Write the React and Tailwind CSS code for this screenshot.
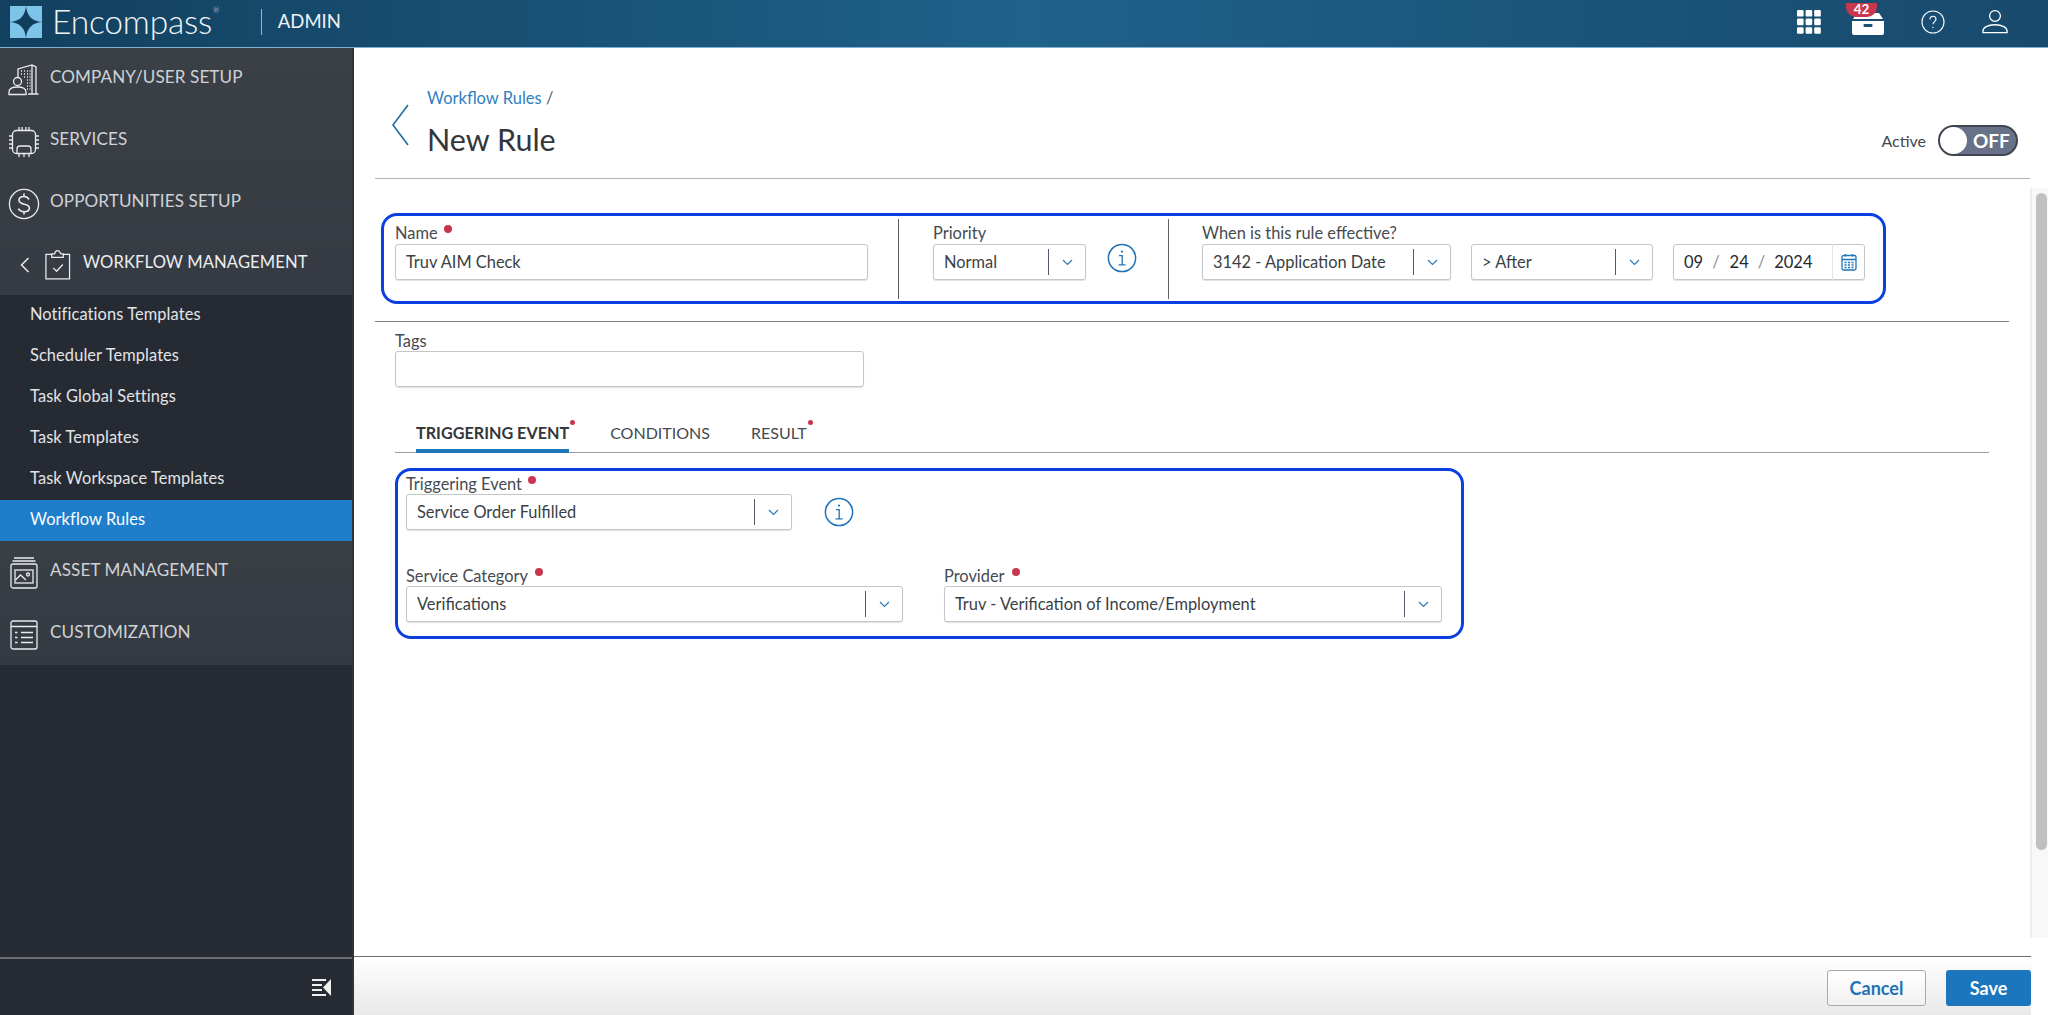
import React from "react";

const font = { fontFamily: '"Lato","Noto Sans",sans-serif' };

function Dot({ className = "ml-[6px]" }) {
  return <span className={"inline-block rounded-full bg-[#c8374d] w-[8px] h-[8px] relative -top-[6px] " + className} />;
}

function Chevron() {
  return (
    <svg width="11" height="7" viewBox="0 0 11 7" fill="none" stroke="#2b7ab8" strokeWidth="1.2">
      <path d="M1 1 L5.5 5.5 L10 1" />
    </svg>
  );
}

function Select({ value, className = "" }) {
  return (
    <div className={"flex items-center h-[36px] bg-white border border-[#c4c6c9] rounded-[3px] shadow-[0_1px_1px_rgba(0,0,0,0.12)] " + className}>
      <span className="flex-1 pl-[10px] text-[16.4px] text-[#3a3f45] whitespace-nowrap truncate">{value}</span>
      <span className="w-px h-[26px] bg-[#53596a]" />
      <span className="w-[36px] flex justify-center"><Chevron /></span>
    </div>
  );
}

function Label({ children, dot, dotClass, className = "" }) {
  return (
    <div className={"h-[15px] leading-[15px] text-[16.4px] text-[#464a50] whitespace-nowrap " + className}>
      {children}
      {dot && <Dot className={dotClass} />}
    </div>
  );
}

function Info({ className = "" }) {
  return (
    <svg className={className} width="30" height="30" viewBox="0 0 30 30" fill="none" stroke="#2073b8" strokeWidth="1.5">
      <circle cx="15" cy="15" r="13.6" />
      <circle cx="15" cy="8.6" r="1.1" fill="#2073b8" stroke="none" />
      <path d="M12 12.6 H15.2 V21.6 M11.6 21.8 H18.6" strokeWidth="1.3" />
    </svg>
  );
}

const ic = { fill: "none", stroke: "#e9ebee", strokeWidth: 1.3 };

function IconCompany() {
  return (
    <svg width="32" height="32" viewBox="0 0 32 32" {...ic}>
      <path d="M10 13 V5 L24 1 L28 3 V30 H30.5 M24 1 V30 M28 30 H20" />
      <path d="M13 7h1M16 7h1M19 7h1M21.5 7h1M13 10h1M16 10h1M19 10h1M21.5 10h1M16 13h1M19 13h1M21.5 13h1M19 16h1M21.5 16h1M19 19h1M21.5 19h1M19 22h1M21.5 22h1M19 25h1M21.5 25h1" />
      <circle cx="9.5" cy="17.5" r="4" />
      <path d="M1 30.5 v-2.5 c0-3 3-5 8.5-5 s8.5 2 8.5 5 v2.5 z" />
    </svg>
  );
}
function IconChip() {
  return (
    <svg width="32" height="32" viewBox="0 0 32 32" {...ic}>
      <rect x="4.5" y="4.5" width="23" height="23" rx="4" />
      <path d="M11 1v3.5M14 1v3.5M18 1v3.5M21 1v3.5M11 27.5V31M16 27.5V31M21 27.5V31M1 10h3.5M1 14h3.5M1 18h3.5M1 22h3.5M27.5 10H31M27.5 14H31M27.5 18H31M27.5 22H31" />
      <path d="M9 27 v-4 q0-3 3-3 h8 q3 0 3 3 v4" />
    </svg>
  );
}
function IconDollar() {
  return (
    <svg width="32" height="32" viewBox="0 0 32 32" {...ic}>
      <circle cx="16" cy="16" r="14.6" />
      <path d="M21 11.5 c-1-2-3-3-5-3 c-3 0-5 1.6-5 3.8 c0 5.4 10.4 2.4 10.4 7.6 c0 2.4-2.4 3.8-5.4 3.8 c-2.4 0-4.6-1-5.6-3 M16 5.5 V8.5 M16 23.7 V26.5" strokeWidth="1.6" />
    </svg>
  );
}
function IconClipboard() {
  return (
    <svg width="27" height="32" viewBox="0 0 28 32" {...ic}>
      <path d="M8 5 H2 V30.5 H26.5 V5 H20 M8 8 V4.5 H11 Q11.6 1 14 1 T17.4 4.5 H20 V8 Z" />
      <path d="M9.5 19 L13 22.5 L19.5 15.5" />
    </svg>
  );
}
function IconAsset() {
  return (
    <svg width="28" height="32" viewBox="0 0 28 32" {...ic}>
      <path d="M4 1h20M2.5 4h23" />
      <rect x="1" y="7" width="26" height="24" rx="2" />
      <rect x="5" y="13" width="18" height="13" />
      <path d="M5.5 23 L10.5 18 L16 23" />
      <circle cx="18" cy="17.5" r="1.5" />
    </svg>
  );
}
function IconList() {
  return (
    <svg width="28" height="30" viewBox="0 0 28 30" {...ic}>
      <rect x="1" y="1" width="26" height="28" rx="2" />
      <path d="M1 6.5 H27 M11 12.5 H23 M11 17.5 H23 M11 22.5 H23 M5 12.5 H7.5 M5 17.5 H7.5 M5 22.5 H7.5" />
    </svg>
  );
}

function NavRow({ icon, label, iconW = "w-[32px]" }) {
  return (
    <div className="h-[62px] flex items-center pl-[8px] gap-[10px] text-[17.1px] text-[#cfd2d6] tracking-[0.1px] whitespace-nowrap">
      <span className={"flex justify-center shrink-0 relative top-[1px] " + iconW}>{icon}</span>
      <span className="relative -top-[2px]">{label}</span>
    </div>
  );
}

function SubItem({ children, active }) {
  return (
    <div className={"h-[41px] flex items-center pl-[30px] text-[16.4px] tracking-[0.1px] whitespace-nowrap " + (active ? "bg-[#1e7ecb] text-white" : "text-[#e2e4e7]")}>
      <span className="relative -top-[1px]">{children}</span>
    </div>
  );
}

function Sidebar() {
  return (
    <aside className="w-[354px] shrink-0 flex flex-col bg-[#262a32] border-r-2 border-r-[#2f333a]">
      <div className="bg-gradient-to-b from-[#3b4047] to-[#363b43]">
        <NavRow icon={<IconCompany />} label="COMPANY/USER SETUP" />
        <NavRow icon={<IconChip />} label="SERVICES" />
        <NavRow icon={<IconDollar />} label="OPPORTUNITIES SETUP" />
        <div className="h-[61px] flex items-center pl-[20px] text-[16.6px] text-[#eceef0] tracking-[0.1px] whitespace-nowrap">
          <svg width="10" height="16" viewBox="0 0 10 16" fill="none" stroke="#e9ebee" strokeWidth="1.5" className="mr-[14px]"><path d="M8.5 1 L1.5 8 L8.5 15" /></svg>
          <span className="mr-[12px]"><IconClipboard /></span>
          <span className="relative -top-[2px]">WORKFLOW MANAGEMENT</span>
        </div>
      </div>
      <div>
        <SubItem>Notifications Templates</SubItem>
        <SubItem>Scheduler Templates</SubItem>
        <SubItem>Task Global Settings</SubItem>
        <SubItem>Task Templates</SubItem>
        <SubItem>Task Workspace Templates</SubItem>
        <SubItem active>Workflow Rules</SubItem>
      </div>
      <div className="bg-gradient-to-b from-[#3a3f46] to-[#343a42]">
        <NavRow icon={<IconAsset />} label="ASSET MANAGEMENT" />
        <NavRow icon={<IconList />} label="CUSTOMIZATION" />
      </div>
      <div className="flex-1" />
      <div className="h-[58px] border-t-2 border-t-[#6b6e73] flex justify-end items-center pr-[20px]">
        <svg width="20" height="18" viewBox="0 0 20 18" fill="#f0f0f0">
          <rect x="0" y="1" width="14" height="2" />
          <rect x="0" y="6" width="10" height="2" />
          <rect x="0" y="11" width="10" height="2" />
          <rect x="0" y="16" width="14" height="2" />
          <path d="M19 1 V18 L11 9.5 Z" />
        </svg>
      </div>
    </aside>
  );
}

function Logo() {
  return (
    <svg width="32" height="32" viewBox="0 0 32 32">
      <rect width="32" height="32" fill="#7ec3e8" />
      <path d="M16 0 C17 10 22 15 32 16 C22 17 17 22 16 32 C15 22 10 17 0 16 C10 15 15 10 16 0 Z" fill="#123e5e" />
    </svg>
  );
}

function Header() {
  return (
    <header className="h-[48px] shrink-0 flex items-center pb-[4px] bg-gradient-to-r from-[#12405f] via-[#1f618a] to-[#184a6d] border-b border-b-[#7fb2d3] text-white">
      <div className="ml-[10px]"><Logo /></div>
      <div className="ml-[10px] text-[33.6px] font-light tracking-[-0.2px] leading-none text-[#f2f5f8] flex">
        Encompass<span className="text-[7px] ml-[1px] mt-[2px]">®</span>
      </div>
      <div className="ml-[42px] w-px h-[26px] bg-[#8db5cf]" />
      <div className="ml-[16px] text-[18.5px] text-[#eef2f5]">ADMIN</div>
      <div className="flex-1" />
      <svg width="24" height="24" viewBox="0 0 24 24" fill="#fff" className="mr-[31px]">
        {[0, 1, 2].map((r) => [0, 1, 2].map((c) => <rect key={r + "-" + c} x={c * 8.6} y={r * 8.6} width="6.6" height="6.6" rx="1.2" />))}
      </svg>
      <div className="relative mr-[37px] mt-[1px]">
        <svg width="32" height="22" viewBox="0 0 32 22" fill="#fff" className="mt-[4px]">
          <path d="M5 0 H27 L31 6 H1 Z" />
          <path d="M0 8 H32 V20 Q32 22 30 22 H2 Q0 22 0 20 Z" />
          <rect x="11.5" y="11" width="9" height="3" rx="1" fill="#1a5273" />
        </svg>
        <span className="absolute -top-[6px] -left-[6px] w-[31px] h-[14px] flex items-start justify-center rounded-b-[10px] bg-[#c8374d] text-[13.5px] leading-[13px] font-bold text-white">42</span>
      </div>
      <svg width="24" height="24" viewBox="0 0 24 24" fill="none" stroke="#fff" strokeWidth="1.1" className="mr-[37px]">
        <circle cx="12" cy="12" r="11" />
        <path d="M9 9.5 c0-2 1.4-3.2 3-3.2 s3 1.2 3 3 c0 2.2-3 2.4-3 5" />
        <circle cx="12" cy="17.4" r="0.7" fill="#fff" stroke="none" />
      </svg>
      <svg width="26" height="25" viewBox="0 0 28 26" fill="none" stroke="#fff" strokeWidth="1.4" className="mr-[40px]">
        <circle cx="14" cy="7" r="5.8" />
        <path d="M1 25 v-1.5 c0-4 5-7 13-7 s13 3 13 7 V25 Z" />
      </svg>
    </header>
  );
}

function Content() {
  return (
    <div className="flex-1 flex flex-col min-w-0 pl-[21px]">
      <div className="h-[131px] flex items-start border-b border-b-[#b0b2b5] relative">
        <svg width="20" height="44" viewBox="0 0 20 44" fill="none" stroke="#1d6f9f" strokeWidth="1.6" className="ml-[16px] mt-[55px] shrink-0">
          <path d="M17 2 L2 22 L17 42" />
        </svg>
        <div className="ml-[16px] mt-[41px]">
          <div className="text-[16.5px] leading-[18px] text-[#2f7fc1]">Workflow Rules <span className="text-[#5c6168]">/</span></div>
          <div className="mt-[15px] text-[30.5px] leading-[34px] text-[#33373c]">New Rule</div>
        </div>
        <div className="flex-1" />
        <div className="flex items-center mt-[77px] mr-[12px]">
          <span className="text-[16px] text-[#44484e] mr-[12px]">Active</span>
          <div className="w-[80px] h-[31px] rounded-full bg-[#677187] border-2 border-[#3f4650] flex items-center relative">
            <span className="w-[27px] h-[27px] rounded-full bg-white" />
            <span className="ml-[6px] text-[19px] font-bold text-white leading-none">OFF</span>
          </div>
        </div>
      </div>

      <div className="mt-[34px] ml-[6px] mr-[144px] h-[91px] border-[3px] border-[#0a3fe0] rounded-[16px] flex items-center pl-[11px] pr-[18px]">
        <div className="w-[473px] shrink-0 self-start mt-[9px]">
          <Label dot>Name</Label>
          <div className="mt-[4px] h-[36px] bg-white border border-[#c4c6c9] rounded-[3px] shadow-[0_1px_1px_rgba(0,0,0,0.12)] flex items-center pl-[10px] text-[16.4px] text-[#3a3f45]">Truv AIM Check</div>
        </div>
        <div className="ml-[30px] w-px h-[80px] bg-[#5e6268] shrink-0" />
        <div className="ml-[34px] w-[153px] shrink-0 self-start mt-[9px]">
          <Label>Priority</Label>
          <Select value="Normal" className="mt-[4px]" />
        </div>
        <Info className="ml-[21px] -mt-[1px] shrink-0" />
        <div className="ml-[31px] w-px h-[80px] bg-[#5e6268] shrink-0" />
        <div className="ml-[33px] shrink-0 self-start mt-[9px]">
          <Label>When is this rule effective?</Label>
          <div className="mt-[4px] flex">
            <Select value="3142 - Application Date" className="w-[249px]" />
            <Select value="> After" className="w-[182px] ml-[20px]" />
            <div className="ml-[20px] w-[192px] h-[36px] border border-[#c4c6c9] rounded-[3px] shadow-[0_1px_1px_rgba(0,0,0,0.12)] flex items-center text-[16.5px] text-[#25282c]">
              <span className="ml-[10px]">09</span>
              <span className="ml-[9px] text-[#8a8e94]">/</span>
              <span className="ml-[10px]">24</span>
              <span className="ml-[9px] text-[#8a8e94]">/</span>
              <span className="ml-[9px]">2024</span>
              <span className="flex-1" />
              <span className="w-[32px] h-[36px] border-l border-l-[#e2e3e5] flex items-center justify-center">
                <svg width="16" height="18" viewBox="0 0 16 18" fill="none" stroke="#1f77bb" strokeWidth="1.3">
                  <rect x="1" y="2.5" width="14" height="14.5" rx="1.5" />
                  <path d="M1 6.5 H15 M4.5 1 V3.5 M11.5 1 V3.5" />
                  <path d="M3.5 9.5h2M7 9.5h2M10.5 9.5h2M3.5 12h2M7 12h2M10.5 12h2M3.5 14.5h2M7 14.5h2M10.5 14.5h2" strokeWidth="1.4" />
                </svg>
              </span>
            </div>
          </div>
        </div>
      </div>

      <div className="mt-[17px] border-t border-t-[#7c7f84] mr-[21px] pl-[20px] pt-[11px]">
        <Label>Tags</Label>
        <div className="mt-[3px] w-[469px] h-[36px] border border-[#c4c6c9] rounded-[3px] shadow-[0_1px_1px_rgba(0,0,0,0.12)]" />
      </div>

      <div className="mt-[29px] ml-[20px] mr-[41px] h-[37px] border-b border-b-[#9a9da8] flex text-[16px] whitespace-nowrap">
        <div className="ml-[21px] h-[37px] border-b-[4px] border-b-[#1f77bb] text-[16.2px] font-bold text-[#33373c] relative pt-[5px]">
          TRIGGERING EVENT
          <span className="absolute top-[4px] -right-[6px] w-[5px] h-[5px] rounded-full bg-[#c8374d]" />
        </div>
        <div className="ml-[41px] pt-[5px] text-[#46494f]">CONDITIONS</div>
        <div className="ml-[41px] pt-[5px] text-[#46494f] relative">
          RESULT
          <span className="absolute top-[4px] -right-[6px] w-[5px] h-[5px] rounded-full bg-[#c8374d]" />
        </div>
      </div>

      <div className="mt-[15px] ml-[20px] w-[1069px] h-[171px] border-[3px] border-[#0a3fe0] rounded-[16px] pl-[8px] pr-[19px] pt-[5px]">
        <Label dot>Triggering Event</Label>
        <div className="mt-[3px] flex items-center">
          <Select value="Service Order Fulfilled" className="w-[386px]" />
          <Info className="ml-[32px]" />
        </div>
        <div className="mt-[38px] flex gap-[41px]">
          <div className="w-[497px]">
            <Label dot dotClass="ml-[7px]">Service Category</Label>
            <Select value="Verifications" className="mt-[3px]" />
          </div>
          <div className="flex-1">
            <Label dot dotClass="ml-[7px]">Provider</Label>
            <Select value="Truv - Verification of Income/Employment" className="mt-[3px]" />
          </div>
        </div>
      </div>
    </div>
  );
}

function Scrollbar() {
  return (
    <div className="w-[18px] shrink-0 pt-[140px]">
      <div className="h-[750px] bg-[#f8f8f8] border-l-2 border-l-[#eeeeee] pt-[5px] pl-[4px]">
        <div className="w-[11px] h-[657px] rounded-full bg-[#c0c0c0]" />
      </div>
    </div>
  );
}

function Footer() {
  return (
    <div className="h-[59px] shrink-0 mr-[17px] border-t border-t-[#6a6d72] bg-gradient-to-b from-white to-[#e9e9e9] flex items-center justify-end">
      <button className="mt-[4px] w-[99px] h-[36px] rounded-[3px] border border-[#a8aaad] bg-gradient-to-b from-white to-[#f1f1f1] text-[18px] font-bold text-[#1f72b4]">Cancel</button>
      <button className="mt-[4px] ml-[20px] w-[85px] h-[36px] rounded-[3px] bg-[#1c76be] text-[18px] font-bold text-white">Save</button>
    </div>
  );
}

export default function App() {
  return (
    <div className="w-[2048px] h-[1015px] flex flex-col overflow-hidden bg-white" style={font}>
      <Header />
      <div className="flex-1 flex min-h-0">
        <Sidebar />
        <div className="flex-1 flex flex-col min-w-0">
          <div className="flex-1 flex min-h-0">
            <Content />
            <Scrollbar />
          </div>
          <Footer />
        </div>
      </div>
    </div>
  );
}
